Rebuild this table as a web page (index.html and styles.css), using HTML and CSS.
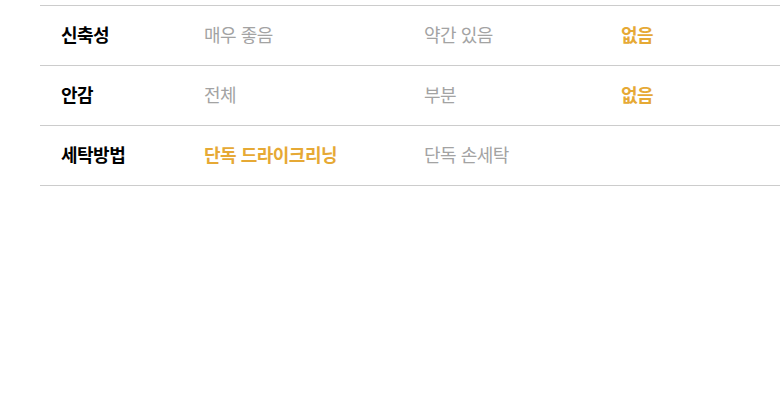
FILE: index.html
```html
<!DOCTYPE html>
<html lang="ko">
<head>
    <meta charset="UTF-8">
    <meta name="viewport" content="width=device-width, initial-scale=1.0">
    <title>소재 정보</title>
    <link rel="stylesheet" href="styles.css">
</head>
<body>
    <div class="info-table">
        <div class="info-row">
            <div class="info-label">신축성</div>
            <div class="info-option">매우 좋음</div>
            <div class="info-option">약간 있음</div>
            <div class="info-option is-active">없음</div>
        </div>
        <div class="info-row">
            <div class="info-label">안감</div>
            <div class="info-option">전체</div>
            <div class="info-option">부분</div>
            <div class="info-option is-active">없음</div>
        </div>
        <div class="info-row">
            <div class="info-label">세탁방법</div>
            <div class="info-option is-active">단독 드라이크리닝</div>
            <div class="info-option">단독 손세탁</div>
            <div class="info-option"></div>
        </div>
    </div>
</body>
</html>
```

FILE: styles.css
```css
:root {
    --fontFamily: "Noto Sans CJK KR", "Noto Sans", sans-serif;
    --colorLine: #cccccc;
    --colorMuted: #a3a3a3;
    --colorAccent: #e6a935;
}

body {
    margin: 0;
    padding: 5px 0 0 40px;
    font-family: var(--fontFamily);
    background: #fff;
}

.info-table {
    border-top: 1px solid var(--colorLine);
}

.info-row {
    display: grid;
    grid-template-columns: 164px 220px 197px 1fr;
    align-items: center;
    box-sizing: border-box;
    height: 60px;
    padding-bottom: 4px;
    border-bottom: 1px solid var(--colorLine);
    font-size: 18px;
    line-height: 24px;
    letter-spacing: -0.5px;
}

.info-label {
    padding-left: 21px;
    font-weight: 700;
    color: #000;
}

.info-option {
    color: var(--colorMuted);
}

.info-option.is-active {
    color: var(--colorAccent);
    font-weight: 700;
}
```
